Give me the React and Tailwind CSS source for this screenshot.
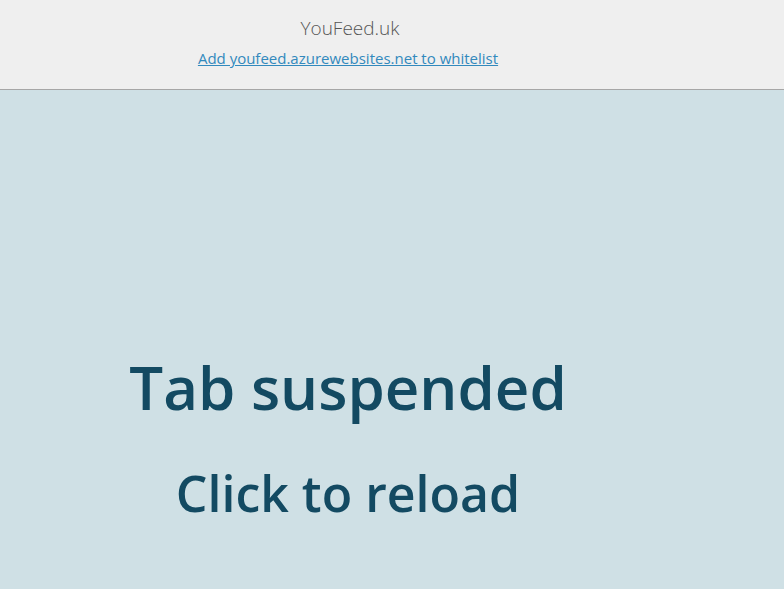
import React from 'react';

const App = () => {
    return (
        <div className="min-h-screen bg-[#cfe0e5]" style={{ fontFamily: '"Open Sans", sans-serif' }}>
            {/* Top bar */}
            <header className="bg-[#efefef] border-b border-[#a6a6a6] h-[90px]">
                <div className="w-[696px] flex flex-col items-center pt-4">
                    <div className="ml-1 text-[19px] leading-6 font-light text-[#555555]">YouFeed.uk</div>
                    <a href="#" className="mt-2 text-[15px] leading-5 text-[#3289bd] underline">
                        Add youfeed.azurewebsites.net to whitelist
                    </a>
                </div>
            </header>

            {/* Suspended message */}
            <main className="w-[696px] flex flex-col items-center pt-[267px] text-[#134a62] font-semibold cursor-pointer">
                <h1 className="text-[60px] leading-[60px]">Tab suspended</h1>
                <h2 className="mt-[51px] text-[50px] leading-[50px]">Click to reload</h2>
            </main>
        </div>
    );
};

export default App;
